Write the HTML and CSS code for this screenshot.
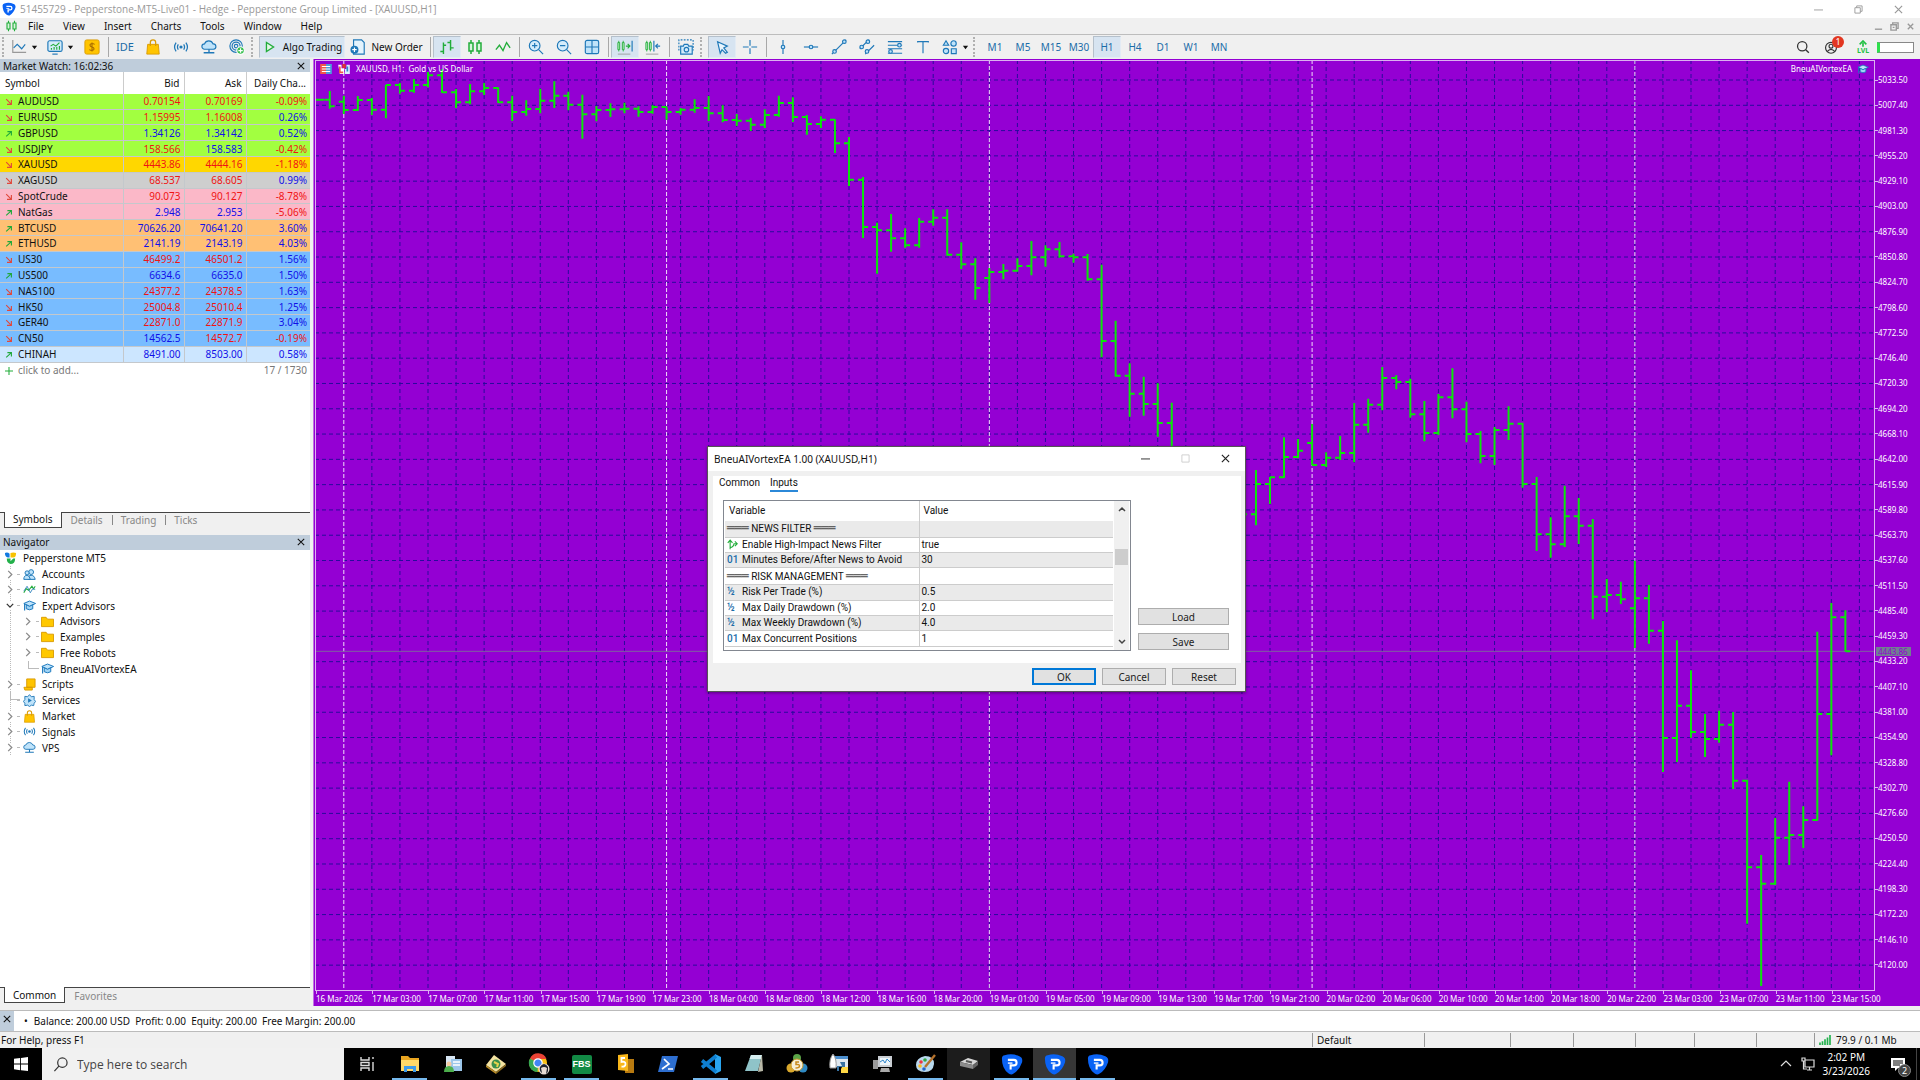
FILE: index.html
```html
<!DOCTYPE html>
<html lang="en">
<head>
<meta charset="utf-8">
<title>51455729 - Pepperstone-MT5-Live01 - Hedge - Pepperstone Group Limited - [XAUUSD,H1]</title>
<link rel="stylesheet" href="styles.css">
</head>
<body>
<svg class="defs" aria-hidden="true">
  <symbol id="shield" viewBox="0 0 24 24"><path d="M1 6Q1 3 4 2.500 12 0 20 3.500 24 5 23 10 20 19 13 23 11 24 8 22 1 17 1 6Z" fill="#0a63f5"/><path d="M7.500 7.500h6.500a2.800 2.800 0 0 1 0 6H10.500V18" fill="none" stroke="#fff" stroke-width="2.300"/><path d="M7.500 11h5" stroke="#fff" stroke-width="1.500"/></symbol>
  <symbol id="down" viewBox="0 0 10 10"><path d="M1.500 1.500 8 8M8 2.500V8H2.500" fill="none" stroke="#e0483c" stroke-width="1.400"/></symbol>
  <symbol id="up" viewBox="0 0 10 10"><path d="M1.500 8 8 2M3 2h5v5" fill="none" stroke="#1fa83a" stroke-width="1.400"/></symbol>
  <symbol id="cap" viewBox="0 0 16 14"><path d="M1 4.500 8 1.500l7.500 3L8 8Z" fill="#bfe3fa" stroke="#1b78bd" stroke-width="1.200"/><path d="M4 6v5q4 2.500 8 0V6L8 8Z" fill="#9fd3f5" stroke="#1b78bd" stroke-width="1.200"/><path d="M2 5v8" stroke="#1b78bd" stroke-width="1.400"/></symbol>
  <symbol id="bag" viewBox="0 0 16 18"><path d="M2 6h12l1 11H1Z" fill="#ffc400" stroke="#d99a00"/><path d="M5 8V4a3 3 0 0 1 6 0v4" fill="none" stroke="#d99a00" stroke-width="1.400"/></symbol>
  <symbol id="signal" viewBox="0 0 18 14"><g fill="none" stroke="#1f78b8" stroke-width="1.400"><path d="M3.500 2Q0 7 3.500 12M6 4Q4 7 6 10M12 4q2 3 0 6M14.500 2q3.500 5 0 10"/></g><circle cx="9" cy="7" r="1.800" fill="#1f78b8"/></symbol>
  <symbol id="cloud" viewBox="0 0 18 16"><path d="M4 10.500a3 3 0 0 1 0-6 5 5 0 0 1 9.500 0 3 3 0 0 1 .5 6Z" fill="#bfe3fa" stroke="#1f78b8" stroke-width="1.300"/><path d="M9 10.500V14M3 14.500h12" stroke="#1f78b8" stroke-width="1.500"/></symbol>
  <symbol id="folder" viewBox="0 0 14 12"><path d="M.5 1.500h5l1.500 2h6.500v8H.5Z" fill="#ffc800" stroke="#d99a00"/></symbol>
  <symbol id="chev" viewBox="0 0 8 10"><path d="m2 1 4 4-4 4" fill="none" stroke="#8a8a8a" stroke-width="1.400"/></symbol>
  <symbol id="caret" viewBox="0 0 8 5"><path d="M1 .5h6L4 4.500Z" fill="#111"/></symbol>
  <symbol id="cross" viewBox="0 0 10 10"><path d="m1 1 8 8M9 1 1 9" fill="none" stroke="currentColor" stroke-width="1.300"/></symbol>
  <symbol id="candles" viewBox="0 0 16 16"><g fill="none" stroke="#22ad3a" stroke-width="1.500"><path d="M4 1v14M12 1v14"/><path d="M2 4h4v8H2ZM10 4h4v8h-4Z" fill="#d8f5dc"/></g></symbol>
  <symbol id="branch" viewBox="0 0 14 14"><path d="M4 13V2M1 5l3-3.500L7 5M4 11q4 0 5-5h3.500M10 3l3 3-3 3" fill="none" stroke="#22ad3a" stroke-width="1.400"/></symbol>
</svg>

<header class="titlebar">
  <svg class="app-logo"><use href="#shield"/></svg>
  <h1>51455729 - Pepperstone-MT5-Live01 - Hedge - Pepperstone Group Limited - [XAUUSD,H1]</h1>
  <div class="window-controls">
    <button aria-label="Minimize"><svg viewBox="0 0 10 10"><path d="M0 5.500h10"/></svg></button>
    <button aria-label="Restore"><svg viewBox="0 0 10 10"><path d="M1 3h6v6H1ZM3 3V1h6v6H7"/></svg></button>
    <button aria-label="Close"><svg><use href="#cross"/></svg></button>
  </div>
</header>

<nav class="menubar">
  <svg class="menu-icon"><use href="#candles"/></svg>
  <button>File</button><button>View</button><button>Insert</button><button>Charts</button><button>Tools</button><button>Window</button><button>Help</button>
  <div class="child-controls">
    <button aria-label="Minimize chart"><svg viewBox="0 0 10 10"><path d="M1 8h8"/></svg></button>
    <button aria-label="Restore chart"><svg viewBox="0 0 10 10"><path d="M1 3h6v6H1ZM3 3V1h6v6H7M3 6h2"/></svg></button>
    <button aria-label="Close chart"><svg viewBox="0 0 10 10"><path d="m2 2 6 6M8 2 2 8"/></svg></button>
  </div>
</nav>

<div class="toolbar">
  <span class="grip"></span>
  <button class="split" aria-label="New chart"><svg viewBox="0 0 18 18" class="blue"><path d="M2 1v14h15" stroke="#999"/><path d="m3 10 4-4 5 5 4-5"/></svg><svg class="caret"><use href="#caret"/></svg></button>
  <button class="split" aria-label="Profiles"><svg viewBox="0 0 18 18" class="blue"><rect x="1" y="2" width="16" height="12" rx="2" fill="#d4ecfb"/><path d="M6 17h6"/><path d="M4 8l3-2 3 2 4-4M5 12v-2M8 12v-3M11 12v-3M14 12V8" stroke="#22ad3a"/></svg><svg class="caret"><use href="#caret"/></svg></button>
  <button aria-label="Symbols"><svg viewBox="0 0 18 18"><rect x="1" y="1" width="16" height="16" rx="2" fill="#ffc400" stroke="#d99a00"/><path d="M12 6q-3-2-5 0-1 2 2 3t2 3q-2 2-5 0M9 4v10" fill="none" stroke="#a86c00" stroke-width="1.200"/></svg></button>
  <span class="sep"></span>
  <button class="ide">IDE</button>
  <button aria-label="Market"><svg><use href="#bag"/></svg></button>
  <button aria-label="Signals"><svg><use href="#signal"/></svg></button>
  <button aria-label="VPS"><svg><use href="#cloud"/></svg></button>
  <button aria-label="Copy trading"><svg viewBox="0 0 18 18" class="blue"><circle cx="8" cy="8" r="7"/><circle cx="8" cy="8" r="4.500"/><circle cx="8" cy="8" r="2"/><circle cx="13" cy="13" r="4.300" fill="#3cc053" stroke="#fff"/><path d="M13 10.500v5M10.500 13h5" stroke="#fff"/></svg></button>
  <span class="grip"></span>
  <button class="labelled algo on"><svg viewBox="0 0 18 18"><path d="M5 4v10l8-5Z" fill="#e4f7e7" stroke="#22ad3a" stroke-width="1.500"/></svg>Algo Trading</button>
  <button class="labelled order"><svg viewBox="0 0 18 18" class="blue"><path d="M4 1h9l3 3v13H4Z" fill="#e3f3fd"/><circle cx="5" cy="12" r="4.500" fill="#1f78b8" stroke="none"/><path d="M5 9.500v5M2.500 12h5" stroke="#fff"/></svg>New Order</button>
  <span class="sep"></span>
  <button class="on" aria-label="Bar chart"><svg viewBox="0 0 18 18"><path d="M5 4v13M1.500 14H5M5 7h3M13 1v12M9.500 4H13M13 10h3.500" fill="none" stroke="#22ad3a" stroke-width="1.600"/></svg></button>
  <button aria-label="Candlesticks"><svg><use href="#candles"/></svg></button>
  <button aria-label="Line chart"><svg viewBox="0 0 18 18"><path d="m1 12 4-5 4 6 4-9 4 6" fill="none" stroke="#22ad3a" stroke-width="1.500"/></svg></button>
  <span class="sep"></span>
  <button aria-label="Zoom in"><svg viewBox="0 0 18 18" class="blue"><circle cx="7.500" cy="7.500" r="6" fill="#d4ecfb"/><path d="m12 12 5 5M4.500 7.500h6M7.500 4.500v6"/></svg></button>
  <button aria-label="Zoom out"><svg viewBox="0 0 18 18" class="blue"><circle cx="7.500" cy="7.500" r="6" fill="#d4ecfb"/><path d="m12 12 5 5M4.500 7.500h6"/></svg></button>
  <button aria-label="Tile windows"><svg viewBox="0 0 18 18" class="blue"><rect x="1.500" y="1.500" width="15" height="15" rx="2" fill="#bfe3fa"/><path d="M9 2v14M2 9h14"/></svg></button>
  <span class="sep"></span>
  <button class="on" aria-label="Auto scroll"><svg viewBox="0 0 18 18"><path d="M2 2v12M7 2v12" stroke="#22ad3a"/><path d="M1 4h2v8H1ZM6 4h2v8H6Z" fill="#bdf0c5" stroke="#22ad3a"/><path d="M10 8h4M12 5.500 14.500 8 12 10.500" fill="none" stroke="#22ad3a" stroke-width="1.300"/><path d="M17 2v12" stroke="#1f78b8" stroke-width="1.300"/><path d="M1 17h14" stroke="#999"/></svg></button>
  <button aria-label="Chart shift"><svg viewBox="0 0 18 18"><path d="M2 2v12M6 2v12" stroke="#22ad3a"/><path d="M1 4h2v8H1ZM5 4h2v8H5Z" fill="#bdf0c5" stroke="#22ad3a"/><path d="M10 2v12M12 8h5M14.500 5.500 12 8l2.500 2.500" fill="none" stroke="#1f78b8" stroke-width="1.300"/><path d="M1 17h14" stroke="#999"/></svg></button>
  <span class="sep"></span>
  <button aria-label="Screenshot"><svg viewBox="0 0 18 18" class="blue"><path d="M1 13V1h16v12" stroke-dasharray="2 1.500"/><path d="M3 8h3l1-2h4l1 2h4v9H3Z" fill="#d4ecfb"/><circle cx="9.500" cy="12" r="2.500"/></svg></button>
  <span class="grip"></span>
  <button class="on" aria-label="Cursor"><svg viewBox="0 0 18 18" class="blue"><path d="m4 3 11 5-4 2 4 5-2 1-4-4-2 4Z" fill="#e9f5fd"/></svg></button>
  <button aria-label="Crosshair"><svg viewBox="0 0 18 18" class="blue"><path d="M9 1v6.500M9 10.500V17M1 9h6.500M10.500 9H17"/></svg></button>
  <span class="sep"></span>
  <button aria-label="Vertical line"><svg viewBox="0 0 18 18" class="blue"><path d="M9 1v16"/><circle cx="9" cy="9" r="2" fill="#bfe3fa"/></svg></button>
  <button aria-label="Horizontal line"><svg viewBox="0 0 18 18" class="blue"><path d="M1 9h16"/><circle cx="9" cy="9" r="2" fill="#bfe3fa"/></svg></button>
  <button aria-label="Trendline"><svg viewBox="0 0 18 18" class="blue"><path d="M1 17 17 1"/><circle cx="4" cy="14" r="2" fill="#bfe3fa"/><circle cx="15" cy="3" r="2" fill="#bfe3fa"/></svg></button>
  <button aria-label="Channel"><svg viewBox="0 0 18 18" class="blue"><path d="M1 11 11 1M7 17 17 7"/><circle cx="3" cy="9" r="2" fill="#bfe3fa"/><circle cx="10" cy="3" r="2" fill="#bfe3fa"/><circle cx="9" cy="14" r="2" fill="#bfe3fa"/></svg></button>
  <button aria-label="Fibonacci"><svg viewBox="0 0 18 18" class="blue"><path d="M1 3h16M1 7h16M1 11h16M1 16h16"/><circle cx="14" cy="7" r="2" fill="#bfe3fa"/><circle cx="4" cy="14" r="2" fill="#bfe3fa"/></svg></button>
  <button aria-label="Text"><svg viewBox="0 0 18 18" class="blue"><path d="M3 4V3h12v1M9 3v13"/></svg></button>
  <button class="split" aria-label="Objects"><svg viewBox="0 0 18 18" class="blue shapes"><path d="m1.500 7 3-5 3 5Z"/><circle cx="13" cy="5" r="3"/><circle cx="4.500" cy="13.500" r="3"/><path d="M10.500 11h5.500v5.500h-5.500Z"/></svg><svg class="caret"><use href="#caret"/></svg></button>
  <span class="grip"></span>
  <button>M1</button><button>M5</button><button>M15</button><button>M30</button><button class="on">H1</button><button>H4</button><button>D1</button><button>W1</button><button>MN</button>
  <div class="toolbar-end">
    <button aria-label="Search"><svg viewBox="0 0 18 18"><circle cx="8" cy="8" r="6" fill="none" stroke="#333" stroke-width="1.600"/><path d="m12.500 12.500 4 4" stroke="#333" stroke-width="1.800"/></svg></button>
    <button class="account" aria-label="Account"><svg viewBox="0 0 18 18"><g fill="none" stroke="#333" stroke-width="1.500"><circle cx="9" cy="10" r="7"/><circle cx="9" cy="8" r="2.500"/><path d="M4 15q5-6 10 0"/></g></svg><span class="badge">1</span></button>
    <button class="lvl"><svg viewBox="0 0 12 8"><path d="M6 8V3M2 5l4-4 4 4" fill="none" stroke="#22c043" stroke-width="2"/></svg>LVL</button>
    <div class="battery"></div>
  </div>
</div>

<main class="workspace">
  <aside class="side">
    <section class="panel">
      <header class="panel-head"><h2>Market Watch: 16:02:36</h2><button aria-label="Close Market Watch"><svg><use href="#cross"/></svg></button></header>
      <table class="quotes">
        <colgroup><col class="c-sym"><col class="c-bid"><col class="c-ask"><col class="c-chg"></colgroup>
        <thead><tr><th>Symbol</th><th>Bid</th><th>Ask</th><th>Daily Cha...</th></tr></thead>
        <tbody>
          <tr class="green"><td><svg><use href="#down"/></svg>AUDUSD</td><td class="r">0.70154</td><td class="r">0.70169</td><td class="r">-0.09%</td></tr>
          <tr class="green"><td><svg><use href="#down"/></svg>EURUSD</td><td class="r">1.15995</td><td class="r">1.16008</td><td>0.26%</td></tr>
          <tr class="green"><td><svg><use href="#up"/></svg>GBPUSD</td><td>1.34126</td><td>1.34142</td><td>0.52%</td></tr>
          <tr class="green"><td><svg><use href="#down"/></svg>USDJPY</td><td class="r">158.566</td><td>158.583</td><td class="r">-0.42%</td></tr>
          <tr class="gold"><td><svg><use href="#down"/></svg>XAUUSD</td><td class="r">4443.86</td><td class="r">4444.16</td><td class="r">-1.18%</td></tr>
          <tr class="silver"><td><svg><use href="#down"/></svg>XAGUSD</td><td class="r">68.537</td><td class="r">68.605</td><td>0.99%</td></tr>
          <tr class="pink"><td><svg><use href="#down"/></svg>SpotCrude</td><td class="r">90.073</td><td class="r">90.127</td><td class="r">-8.78%</td></tr>
          <tr class="pink"><td><svg><use href="#up"/></svg>NatGas</td><td>2.948</td><td>2.953</td><td class="r">-5.06%</td></tr>
          <tr class="orange"><td><svg><use href="#up"/></svg>BTCUSD</td><td>70626.20</td><td>70641.20</td><td>3.60%</td></tr>
          <tr class="orange"><td><svg><use href="#up"/></svg>ETHUSD</td><td>2141.19</td><td>2143.19</td><td>4.03%</td></tr>
          <tr class="sky"><td><svg><use href="#down"/></svg>US30</td><td class="r">46499.2</td><td class="r">46501.2</td><td>1.56%</td></tr>
          <tr class="sky"><td><svg><use href="#up"/></svg>US500</td><td>6634.6</td><td>6635.0</td><td>1.50%</td></tr>
          <tr class="sky"><td><svg><use href="#down"/></svg>NAS100</td><td class="r">24377.2</td><td class="r">24378.5</td><td>1.63%</td></tr>
          <tr class="sky"><td><svg><use href="#down"/></svg>HK50</td><td class="r">25004.8</td><td class="r">25010.4</td><td>1.25%</td></tr>
          <tr class="sky"><td><svg><use href="#down"/></svg>GER40</td><td class="r">22871.0</td><td class="r">22871.9</td><td>3.04%</td></tr>
          <tr class="sky"><td><svg><use href="#down"/></svg>CN50</td><td>14562.5</td><td class="r">14572.7</td><td class="r">-0.19%</td></tr>
          <tr class="pale"><td><svg><use href="#up"/></svg>CHINAH</td><td>8491.00</td><td>8503.00</td><td>0.58%</td></tr>
        </tbody>
        <tfoot><tr><td colspan="2"><svg viewBox="0 0 10 10"><path d="M5 0v10M0 5h10" stroke="#22ad3a" stroke-width="1.300"/></svg>click to add...</td><td colspan="2">17 / 1730</td></tr></tfoot>
      </table>
      <div class="tabs"><button class="active">Symbols</button><button>Details</button><button>Trading</button><button>Ticks</button></div>
    </section>
    <section class="panel">
      <header class="panel-head nav-head"><h2>Navigator</h2><button aria-label="Close Navigator"><svg><use href="#cross"/></svg></button></header>
      <ul class="tree">
        <li class="root"><svg viewBox="0 0 14 14"><path d="M1 1q3-1 5 1v4H4Q1 5 1 1Z" fill="#1179e0"/><path d="M7 1q3-1 6 0 0 5-3 5H7Z" fill="#f7c200"/><path d="M3 7h4v3l3-3h2q0 6-5 6-4-1-4-6Z" fill="#23b04a"/></svg>Pepperstone MT5</li>
        <li><svg class="exp"><use href="#chev"/></svg><svg viewBox="0 0 16 14"><g fill="#bfe3fa" stroke="#1f78b8" stroke-width="1.200"><circle cx="10" cy="4" r="3"/><path d="M6 13q0-5 4-5t5 5Z"/><circle cx="5" cy="5" r="2.500"/><path d="M1 13q0-5 4-5 3 0 4 5Z"/></g></svg>Accounts</li>
        <li><svg class="exp"><use href="#chev"/></svg><svg viewBox="0 0 16 14"><path d="m1 11 3-5 3 2 4-5 2 3 2-3" fill="none" stroke="#22ad3a" stroke-width="1.300"/><path d="m1 9 4-6 4 8 3-5 3 1" fill="none" stroke="#1f78b8"/></svg>Indicators</li>
        <li><svg class="exp" viewBox="0 0 10 8"><path d="m1 2 4 4 4-4" fill="none" stroke="#333" stroke-width="1.600"/></svg><svg><use href="#cap"/></svg>Expert Advisors</li>
        <li class="sub"><svg class="exp"><use href="#chev"/></svg><svg><use href="#folder"/></svg>Advisors</li>
        <li class="sub"><svg class="exp"><use href="#chev"/></svg><svg><use href="#folder"/></svg>Examples</li>
        <li class="sub"><svg class="exp"><use href="#chev"/></svg><svg><use href="#folder"/></svg>Free Robots</li>
        <li class="sub leaf"><span class="exp"></span><svg><use href="#cap"/></svg>BneuAIVortexEA</li>
        <li><svg class="exp"><use href="#chev"/></svg><svg viewBox="0 0 14 14"><path d="M4 1h9v9H4ZM1 10h9v3H2Z" fill="#ffc400" stroke="#d99a00"/></svg>Scripts</li>
        <li class="leaf"><span class="exp"></span><svg viewBox="0 0 14 14"><path d="M7 .7 9 3l3-.5L12 6l1.500 2L12 10l-.5 2.500L9 12l-2 1.500L5 12l-3 .5L2 10 .5 8 2 6l0-3.500L5 3Z" fill="#bfe3fa" stroke="#1f78b8"/><path d="M5.500 4.500v5l4-2.500Z" fill="#1f78b8"/></svg>Services</li>
        <li><svg class="exp"><use href="#chev"/></svg><svg><use href="#bag"/></svg>Market</li>
        <li><svg class="exp"><use href="#chev"/></svg><svg><use href="#signal"/></svg>Signals</li>
        <li><svg class="exp"><use href="#chev"/></svg><svg><use href="#cloud"/></svg>VPS</li>
      </ul>
      <div class="tabs"><button class="active">Common</button><button>Favorites</button></div>
    </section>
  </aside>

  <section class="chart" aria-label="XAUUSD H1 chart">
    <div class="plot">
      <svg id="bars" viewBox="3 3 4674 2787" preserveAspectRatio="none"></svg>
      <div class="plot-title">
        <svg viewBox="0 0 14 12"><path d="M0 0h7v12H0Z" fill="#f0574a"/><path d="M7 0h7v12H7Z" fill="#4c9ddb"/><path d="M2 3h10M2 6h10M2 9h10" stroke="#fff" stroke-width="1.400"/></svg>
        <svg viewBox="0 0 14 12"><path d="M0 1h4v4h3v7H2Z" fill="#fff"/><path d="M2 3v7h4" fill="none" stroke="#f0574a" stroke-width="2"/><path d="M5 0h4v5H5Z" fill="#d33"/><path d="M10 1h4v11H8V6h2Z" fill="#d8efff"/><path d="M11 3v6" stroke="#2f86cc" stroke-width="2"/></svg>
        <span>XAUUSD, H1:&nbsp; Gold vs US Dollar</span>
        <span class="ea-name">BneuAIVortexEA</span>
        <svg><use href="#cap"/></svg>
      </div>
    </div>
    <ul class="prices" id="prices"></ul>
    <ul class="times" id="times"></ul>
  </section>
</main>

<section class="toolbox">
  <button aria-label="Close Toolbox"><svg><use href="#cross"/></svg></button>
  <p><span>•</span>Balance: 200.00 USD&nbsp; Profit: 0.00&nbsp; Equity: 200.00&nbsp; Free Margin: 200.00</p>
</section>

<footer class="status">
  <span class="help">For Help, press F1</span>
  <span>Default</span><span></span><span></span><span></span><span></span><span></span><span></span>
  <span><svg viewBox="0 0 14 12"><path d="M1 12V9M4 12V7.500M7 12V5M10 12V3M13 12V0" stroke="#22b14c" stroke-width="2"/></svg>79.9 / 0.1 Mb</span>
</footer>

<div class="taskbar">
  <button class="start" aria-label="Start"><svg viewBox="0 0 16 16"><path d="m0 2 7-1v6.500H0ZM8 1l8-1v7.500H8ZM0 8.500h7V15l-7-1ZM8 8.500h8V16l-8-1Z" fill="#fff"/></svg></button>
  <label class="search"><svg viewBox="0 0 16 16"><circle cx="10" cy="6" r="5" fill="none" stroke="#333" stroke-width="1.300"/><path d="m6.500 9.500-5 5.500" stroke="#333" stroke-width="1.300"/></svg><input type="text" placeholder="Type here to search" aria-label="Search"></label>
  <div class="apps">
    <button aria-label="Task view"><svg viewBox="0 0 22 22"><path d="M5 4v3h8V4M5 18v-3h8v3M5 9.500h8v3H5ZM17 4v2M17 9v9" fill="none" stroke="#ddd" stroke-width="1.400"/></svg></button>
    <button class="run" aria-label="File Explorer"><svg viewBox="0 0 22 22"><path d="M2 3h7l2 2h9v13H2Z" fill="#e9a520"/><path d="M2 7h18v11H2Z" fill="#ffd868"/><path d="M5 19v-6h12v6h-3v-3H8v3Z" fill="#3d9be9"/></svg></button>
    <button aria-label="Contacts"><svg viewBox="0 0 22 22"><path d="M4 3h9v12H4Z" fill="#d7e6f3"/><path d="M9 6h11v12H9Z" fill="#9cc6ea"/><path d="M11 9h7M11 12h7" stroke="#fff" stroke-width="1.500"/><circle cx="7" cy="11" r="2.500" fill="#f2c9a0"/><path d="M2 19q0-6 5-6t5 6Z" fill="#4cae4c"/></svg></button>
    <button aria-label="Editor"><svg viewBox="0 0 22 22"><path d="m1 12 8-10 12 9-10 8Z" fill="#f4e3a1"/><path d="m1 12 10 7v2L1 14Z" fill="#b98c28"/><path d="m11 19 10-8v2l-10 8Z" fill="#8a6a1c"/><circle cx="11" cy="11" r="4.500" fill="#3a8f4c"/><path d="m9 9 4 2-1 3" fill="none" stroke="#e8d34c" stroke-width="2"/></svg></button>
    <button class="run" aria-label="Chrome"><svg viewBox="0 0 22 22"><circle cx="10" cy="10" r="9" fill="#fbc116"/><path d="M10 10 2 5.500A9 9 0 0 1 18.500 6H10Z" fill="#ea4335"/><path d="M10 10 2 5.500A9 9 0 0 0 9.500 19Z" fill="#34a853"/><circle cx="10" cy="10" r="4.200" fill="#4285f4" stroke="#fff" stroke-width="1.200"/><circle cx="16" cy="16" r="5.500" fill="#e9dcd4"/><path d="M12 14q4-6 8 0v4q-1 3-2 3l1-6q-3-2-6 0l1 5q-3-2-2-6Z" fill="#20242e"/></svg></button>
    <button class="run fbs"><span>FBS</span></button>
    <button aria-label="MetaEditor"><svg viewBox="0 0 22 22"><path d="M11 6h9v14h-9Z" fill="#b87a10"/><path d="m4 2 10-1v17L4 17Z" fill="#f9b71a"/><path d="M11 5H7.500v4q4-1 4 2t-4 2.500" fill="none" stroke="#fff" stroke-width="1.800"/></svg></button>
    <button aria-label="PowerShell"><svg viewBox="0 0 22 22"><path d="M5 3h16l-4 16H1Z" fill="#2e6fd0"/><path d="m7 6 5 5-7 5M11 16h5" fill="none" stroke="#fff" stroke-width="1.700"/></svg></button>
    <button class="run" aria-label="VS Code"><svg viewBox="0 0 22 22"><path d="m15 1 6 3v14l-6 3Z" fill="#29a5f0"/><path d="m16 3-14 11.500M2 7.500 16 19" stroke="#0f7fd0" stroke-width="3.600"/></svg></button>
    <button aria-label="Notepad"><svg viewBox="0 0 22 22"><path d="M8 2h11l-4 16H2Z" fill="#8fc3c8"/><path d="M8 2h11l-1 4H6.500Z" fill="#d5eef0"/><path d="m19 2 1 16-5 1 3-14Z" fill="#b9b9a8"/></svg></button>
    <button aria-label="MetaTrader"><svg viewBox="0 0 22 22"><circle cx="11" cy="5" r="4" fill="#5ba548"/><circle cx="5" cy="15" r="4.500" fill="#d9a82c"/><circle cx="17" cy="15" r="4.500" fill="#2f8ac4"/><circle cx="11" cy="12" r="6" fill="#f6efd8" stroke="#c99a2c"/><path d="M13 9h-3v2.500q3.500-.5 3.500 1.500t-4 2" fill="none" stroke="#c98a1c" stroke-width="1.500"/></svg></button>
    <button aria-label="Python launcher"><svg viewBox="0 0 22 22"><path d="M5 3h14v11H5Z" fill="#dfe8ef"/><path d="M5 3h14v3H5Z" fill="#4c8fce"/><path d="M4 1q4 5 3 14H1Q0 6 4 1Z" fill="#fff" stroke="#999"/><path d="M11 9h5v5h-6v4H8v-5h5Z" fill="#3873a3"/><path d="M13 14h6v6h-7v-4Z" fill="#ffd845"/></svg></button>
    <button aria-label="Performance"><svg viewBox="0 0 22 22"><path d="M6 3h14v11H6Z" fill="#c9ced3"/><path d="M8 5h10v7H8Z" fill="#eef6fb"/><path d="m8 9 3-2 2 3 2-4 3 3" fill="none" stroke="#2f86cc"/><path d="M1 7h5v9H1Z" fill="#9a9a9a"/><path d="M9 15h8l1 4H8Z" fill="#aaa"/></svg></button>
    <button class="run" aria-label="Paint"><svg viewBox="0 0 22 22"><path d="M10 3q9 0 9 8-1 8-9 8Q1 19 1 12t9-9Z" fill="#b9d9ee"/><circle cx="6" cy="9" r="1.800" fill="#e34"/><circle cx="10" cy="7" r="1.800" fill="#3a4"/><circle cx="5" cy="13" r="1.800" fill="#fb2"/><circle cx="9" cy="16" r="1.800" fill="#26c"/><path d="M20 2 10 14" stroke="#b5722c" stroke-width="2.400"/></svg></button>
    <button class="dim" aria-label="Scanner"><svg viewBox="0 0 22 22"><path d="m2 9 8-4 10 3-5 4Z" fill="#d7d7d7"/><path d="m2 9 13 3v4L2 13Z" fill="#8b8b8b"/><path d="m15 12 5-4v4l-5 4Z" fill="#666"/><path d="m8 8 6 1.500" stroke="#555" stroke-width="2"/></svg></button>
    <button class="run" aria-label="Pepperstone 1"><svg><use href="#shield"/></svg></button>
    <button class="run current" aria-label="Pepperstone 2"><svg><use href="#shield"/></svg></button>
    <button class="run" aria-label="Pepperstone 3"><svg><use href="#shield"/></svg></button>
  </div>
  <div class="tray">
    <svg viewBox="0 0 14 14"><path d="m2 9 5-5 5 5"/></svg>
    <svg viewBox="0 0 14 14"><path d="M4 3h9v7H4ZM6 13h5M8.500 10v3M1 1h3v3H1ZM2.500 4v8H6"/></svg>
    <time datetime="2026-03-23T14:02">2:02 PM<br>3/23/2026</time>
    <button class="notes" aria-label="Notifications"><svg viewBox="0 0 14 14"><path d="M0 1h14v10H7l-3 3v-3H0Z" fill="#fff" stroke="none"/><path d="M2 4h10M2 6h10M2 8h7" stroke="#000"/></svg><span class="badge">2</span></button>
  </div>
</div>

<div class="dialog" role="dialog" aria-labelledby="dlg-title">
  <header>
    <h2 id="dlg-title">BneuAIVortexEA 1.00 (XAUUSD,H1)</h2>
    <button aria-label="Minimize"><svg viewBox="0 0 10 10"><path d="M0 5.500h10"/></svg></button>
    <button aria-label="Maximize" disabled><svg viewBox="0 0 10 10"><path d="M1 1h8v8H1Z"/></svg></button>
    <button aria-label="Close"><svg><use href="#cross"/></svg></button>
  </header>
  <div class="sheet">
    <div class="sheet-main">
      <div class="dlg-tabs"><button>Common</button><button class="active">Inputs</button></div>
      <div class="inputs">
        <table>
          <thead><tr><th>Variable</th><th>Value</th></tr></thead>
          <tbody>
            <tr><td><b>═══</b> NEWS FILTER <b>═══</b></td><td></td></tr>
            <tr><td><svg><use href="#branch"/></svg>Enable High-Impact News Filter</td><td>true</td></tr>
            <tr><td><i>01</i>Minutes Before/After News to Avoid</td><td>30</td></tr>
            <tr><td><b>═══</b> RISK MANAGEMENT <b>═══</b></td><td></td></tr>
            <tr><td><i>½</i>Risk Per Trade (%)</td><td>0.5</td></tr>
            <tr><td><i>½</i>Max Daily Drawdown (%)</td><td>2.0</td></tr>
            <tr><td><i>½</i>Max Weekly Drawdown (%)</td><td>4.0</td></tr>
            <tr><td><i>01</i>Max Concurrent Positions</td><td>1</td></tr>
          </tbody>
        </table>
        <div class="scroll">
          <svg viewBox="0 0 8 8"><path d="m1 6 3-3 3 3"/></svg>
          <span class="thumb"></span>
          <svg viewBox="0 0 8 8"><path d="m1 2 3 3 3-3"/></svg>
        </div>
      </div>
    </div>
    <div class="sheet-side"><button class="btn">Load</button><button class="btn">Save</button></div>
  </div>
  <footer><button class="btn primary">OK</button><button class="btn">Cancel</button><button class="btn">Reset</button></footer>
</div>
<script src="chart.js"></script>
</body>
</html>
```
FILE: styles.css
```css
* { box-sizing: border-box; }
body {
  margin: 0;
  height: 100vh;
  display: flex;
  flex-direction: column;
  overflow: hidden;
  background: #f0f0f0;
  color: #111;
  font: 10px/12px "Noto Sans", "Open Sans", sans-serif;
}
h1, h2, p, ul { margin: 0; padding: 0; font-size: inherit; font-weight: normal; list-style: none; }
button { border: 0; padding: 0; background: none; color: inherit; font: inherit; display: flex; align-items: center; justify-content: center; }
svg { display: block; flex: none; }
.defs { position: absolute; width: 0; height: 0; }

/* title and menu */
.titlebar { display: flex; align-items: center; height: 18px; padding-left: 2px; gap: 4px; background: #fff; color: #999; flex: none; }
.titlebar h1 { flex: 1; font-family: "Open Sans", sans-serif; }
.app-logo { width: 14px; height: 14px; }
.window-controls, .child-controls { display: flex; margin-left: auto; }
.window-controls button { width: 40px; }
.window-controls { padding-right: 2px; }
.window-controls svg { width: 9px; height: 9px; fill: none; stroke: #999; }
.menubar { display: flex; align-items: center; gap: 19px; height: 17px; padding: 0 2px 0 5px; border-bottom: 1px solid #bdbdbd; flex: none; }
.menu-icon { width: 13px; height: 12px; margin-right: -9px; }
.child-controls button { width: 16px; }
.child-controls svg { width: 9px; height: 9px; fill: none; stroke: #999; stroke-width: 1.5; }

/* toolbar */
.toolbar { display: flex; align-items: stretch; height: 24px; padding: 1px 0; flex: none; color: #1b6ca8; }
.toolbar button { width: 28px; font-size: 10px; }
.toolbar svg { width: 16px; height: 16px; }
.toolbar .split { width: 36px; gap: 4px; justify-content: flex-start; padding-left: 5px; }
.toolbar .caret { width: 7px; height: 5px; }
.toolbar .ide { font-size: 11px; }
.toolbar .labelled { color: #111; gap: 5px; font-size: 10px; }
.toolbar .algo { width: 86px; }
.toolbar .order { width: 83px; }
.toolbar .on { background: #d7e4f1; border: 1px solid #b5c0cb; border-right-color: #e3ebf4; border-bottom-color: #e3ebf4; }
.blue { fill: none; stroke: #1f78b8; stroke-width: 1.3; }
.shapes { fill: #bfe3fa; }
.grip { width: 8px; border-left: 2px dotted #b0b0b0; margin: 1px 0; flex: none; }
.grip:first-child { width: 4px; border-left: 0; border-right: 2px dotted #b0b0b0; margin-right: 2px; }
.sep { width: 5px; margin: 1px 0; flex: none; background: linear-gradient(#a8a8a8, #a8a8a8) 2px 0 / 1px 100% no-repeat; }
.toolbar-end { display: flex; align-items: center; margin-left: auto; padding-right: 6px; }
.toolbar-end .account { position: relative; margin-right: 4px; }
.toolbar-end svg { width: 14px; height: 14px; }
.account .badge { position: absolute; right: 1px; top: -4px; width: 12px; height: 12px; border-radius: 6px; background: #e23620; color: #fff; font-size: 9px; text-align: center; }
.toolbar .lvl { flex-direction: column; font-size: 7px; line-height: 7px; font-weight: bold; color: #22c043; }
.lvl svg { width: 10px; height: 7px; }
.battery { width: 37px; height: 11px; border: 1px solid #888; border-left: 3px solid #2ee04c; background: #fff; }

/* workspace */
.workspace { flex: 1; min-height: 0; display: grid; grid-template-columns: 310px 1fr; gap: 3px; }
.side { display: grid; grid-template-rows: 1fr 1fr; min-height: 0; }
.panel { display: flex; flex-direction: column; min-height: 0; background: #fff; }
.panel-head { display: flex; align-items: center; justify-content: space-between; height: 13px; padding: 0 5px 0 3px; background: #bfcddb; flex: none; }
.nav-head { height: 15px; }
.panel-head svg { width: 8px; height: 8px; }
.quotes { width: 100%; height: 306px; table-layout: fixed; border-collapse: collapse; }
.c-sym { width: 123px; } .c-bid { width: 61px; } .c-ask { width: 62px; }
.quotes th { height: 22px; font-weight: normal; text-align: right; padding: 0 4px; border-right: 1px solid #ccc; }
.quotes th:first-child, .quotes td:first-child { text-align: left; padding-left: 5px; }
.quotes td { padding: 0 3px 0 5px; text-align: right; color: #1010e8; border: 0 solid #c4c8cc; border-width: 0 1px 1px 0; }
.quotes td:first-child { color: #111; }
.quotes th:last-child, .quotes td:last-child { border-right: 0; white-space: nowrap; }
.quotes tbody .r { color: #f01414; }
.quotes svg { display: inline-block; width: 8px; height: 8px; margin-right: 5px; vertical-align: -1px; }
.quotes tfoot td, .quotes tfoot td:first-child { height: 16px; border: 0; color: #777; }
.green { background: #a2ff40; } .gold { background: #ffd700; } .silver { background: #cecece; }
.pink { background: #fbb8c8; } .orange { background: #ffc074; } .sky { background: #78bcff; } .pale { background: #cce6ff; }
.tabs { display: flex; height: 23px; margin-top: auto; padding: 0 0 7px 4px; background: #f0f0f0; border-top: 1px solid #444; flex: none; }
.tabs button { padding: 0 9px; color: #888; }
.tabs button + button + button { padding-left: 0; }
.tabs button + button + button::before { content: ""; width: 1px; height: 10px; background: #888; margin-right: 8px; }
.tabs .active { background: #fff; color: #111; border: solid #444; border-width: 0 1px 1px; margin-top: -1px; padding: 0 8px; }

/* navigator tree */
.tree { display: grid; grid-template-rows: repeat(13, 1fr); height: 205px; margin-top: 1px; }
.tree li { display: flex; align-items: center; gap: 6px; padding-left: 6px; background: repeating-linear-gradient(#bbb 0 1px, transparent 1px 2px) 10px 0 / 1px 100% no-repeat, linear-gradient(#bbb, #bbb) 17px 50% / 3px 1px no-repeat; }
.tree li svg { width: 13px; height: 13px; }
.tree .exp, .tree li svg.exp { width: 8px; height: 9px; margin-right: -3px; background: #fff; flex: none; }
.tree li:not(.root) > :nth-child(2) { margin-left: 6px; }
.tree li.root { padding-left: 4px; background: none; }
.tree li.sub { padding-left: 24px; background: repeating-linear-gradient(#bbb 0 1px, transparent 1px 2px) 10px 0 / 1px 100% no-repeat, linear-gradient(#bbb, #bbb) 36px 50% / 3px 1px no-repeat; }
.tree li.leaf span.exp { width: 14px; height: 16px; margin-right: -9px; background: linear-gradient(#bbb, #bbb) 4px 7px / 10px 1px no-repeat, linear-gradient(#bbb, #bbb) 4px 0 / 1px 7px no-repeat; }

/* chart */
.chart { display: grid; grid-template-columns: 1fr 45px; grid-template-rows: 1fr 15px; margin-bottom: 4px; padding: 1px 0 0 2px; background: #9400d3; color: #fff; font-size: 8px; line-height: 10px; min-width: 0; min-height: 0; box-shadow: inset 1px 0 #c070e4; }
.plot { display: grid; border: 1px solid #dcb0f0; min-width: 0; min-height: 0; }
.plot > * { grid-area: 1 / 1; min-width: 0; min-height: 0; }
#bars { width: 100%; height: 100%; }
#bars path { fill: none; vector-effect: non-scaling-stroke; }
#bars .grid-line { stroke: #2a0a9c; stroke-width: 1; stroke-dasharray: 4 3; }
#bars .day { stroke: #f0dcf8; stroke-width: 1; stroke-dasharray: 4 2; }
#bars .bid { stroke: #8060a0; stroke-width: 1; }
#bars .ohlc { stroke: #0ae60a; stroke-width: 2; }
.plot-title { display: flex; align-items: center; align-self: start; gap: 5px; padding: 3px 4px; }
.plot-title svg { width: 12px; height: 10px; margin-right: 1px; }
.ea-name { margin-left: auto; }
.prices { display: flex; flex-direction: column; justify-content: space-between; padding: 15px 0 21px; position: relative; }
.prices li { display: flex; align-items: center; height: 10px; }
.prices li::before { content: ""; width: 4px; height: 1px; background: #dcb0f0; margin-left: -1px; }
.prices .now { position: absolute; top: 63%; left: 1px; height: 9px; line-height: 9px; padding: 0 3px 0 2px; background: #708090; color: #9400d3; }
.prices .now::before { display: none; }
.times { grid-column: 1 / 3; display: grid; grid-template-columns: repeat(28, 1fr); padding: 0 32px 0 1px; white-space: nowrap; }
.times li { min-width: 0; line-height: 9px; }
.times li::before { content: ""; display: block; width: 1px; height: 3px; background: #dcb0f0; }

/* toolbox and status */
.toolbox { display: flex; height: 21px; border-top: 1px solid #bbb; background: #fff; flex: none; }
.toolbox button { width: 14px; background: #bfcddb; align-items: flex-start; padding-top: 4px; }
.toolbox svg { width: 8px; height: 8px; }
.toolbox p { align-self: center; padding-left: 10px; }
.toolbox p span { margin-right: 6px; }
.status { display: grid; grid-template-columns: 1fr 112px 86px 63px 62px 59px 62px 58px 106px; height: 17px; border-top: 1px solid #bbb; flex: none; }
.status span { display: flex; align-items: center; gap: 5px; margin: 1px 0; padding-left: 4px; border-left: 1px solid #999; }
.status .help { border: 0; padding-left: 1px; }
.status svg { width: 12px; height: 10px; }

/* taskbar */
.taskbar { display: flex; height: 32px; background: #000; color: #fff; flex: none; }
.start { width: 42px; }
.start svg { width: 14px; height: 14px; }
.search { display: flex; align-items: center; gap: 9px; width: 302px; padding: 1px 0 0 11px; background: #f1f1f1; }
.search svg { width: 15px; height: 15px; }
.search input { border: 0; background: none; padding: 0; font: 12px/16px "Open Sans", sans-serif; width: 200px; }
.search input::placeholder { color: #444; opacity: 1; }
.apps { display: flex; padding-left: 1px; }
.apps button { width: 43px; }
.apps svg { width: 22px; height: 22px; }
.apps .run { background: linear-gradient(#76b9ed, #76b9ed) 50% 100% / 35px 2px no-repeat; }
.apps .dim { background: #1c1c1c; }
.apps .current { background: linear-gradient(#76b9ed, #76b9ed) 50% 100% / 100% 2px no-repeat, #363636; }
.fbs span { width: 20px; height: 19px; border-radius: 2px; background: #128a45; font: bold 9px/19px "Liberation Sans", sans-serif; }
.tray { display: flex; align-items: center; gap: 8px; margin-left: auto; padding-right: 3px; }
.tray svg { width: 14px; height: 14px; fill: none; stroke: #ddd; stroke-width: 1.2; }
.tray time { font-size: 10px; line-height: 14px; text-align: center; }
.notes { position: relative; width: 38px; height: 32px; margin-left: 1px; border-right: 1px solid #444; }
.notes .badge { position: absolute; right: 5px; bottom: 3px; width: 13px; height: 13px; border-radius: 7px; background: #444; border: 1px solid #888; font-size: 9px; line-height: 11px; }

/* expert inputs window */
.dialog { position: absolute; left: 707px; top: 446px; width: 539px; border: 1px solid #555; background: #f0f0f0; box-shadow: 0 1px 3px #0006; }
.dialog header { display: flex; align-items: center; height: 24px; padding: 0 0 1px 6px; background: #fff; }
.dialog h2 { flex: 1; }
.dialog header button { width: 40px; color: #222; }
.dialog header svg { width: 9px; height: 9px; fill: none; stroke: #222; }
.dialog header button:disabled svg { stroke: #ccc; }
.sheet { display: flex; gap: 7px; margin: 5px 4px 0 5px; padding-right: 12px; height: 187px; background: #fff; font-family: Roboto, sans-serif; }
.sheet-main { flex: 1; padding-left: 10px; }
.dlg-tabs { display: flex; gap: 10px; height: 24px; padding-left: 6px; margin-left: -10px; align-items: flex-start; }
.dlg-tabs button { height: 16px; border-bottom: 2px solid transparent; }
.dlg-tabs .active { border-color: #2b88d8; }
.inputs { display: flex; height: 151px; border: 1px solid #828790; padding: 0 1px; overflow: hidden; }
.inputs table { flex: 1; height: 146px; table-layout: fixed; border-collapse: collapse; }
.inputs th { height: 20px; text-align: left; font-weight: normal; padding: 0 4px; }
.inputs th:first-child { width: 194px; }
.inputs tr > :first-child { border-right: 1px solid #ccc; }
.inputs td { padding: 0 2px; border-bottom: 1px solid #ccc; white-space: nowrap; }
.inputs tbody tr:nth-child(odd) { background: #eaeaea; }
.inputs svg { display: inline-block; width: 11px; height: 11px; margin-right: 4px; vertical-align: -2px; }
.inputs i { display: inline-block; width: 15px; font-style: normal; font-weight: 500; color: #1b6ca8; }
.inputs b { font: 12px/12px "DejaVu Sans", sans-serif; color: #444; }
.scroll { display: flex; flex-direction: column; align-items: center; width: 15px; margin-left: 1px; padding: 4px 0; background: #f0f0f0; }
.scroll svg { width: 8px; height: 8px; margin: 0; fill: none; stroke: #444; stroke-width: 1.5; }
.thumb { width: 13px; height: 16px; margin: 36px 0 auto; background: #cdcdcd; }
.sheet-side { display: flex; flex-direction: column; justify-content: flex-end; gap: 8px; width: 91px; padding-bottom: 13px; font-family: "Noto Sans", sans-serif; }
.btn { height: 17px; border: 1px solid #adadad; background: #e1e1e1; color: #222; }
.dialog footer { display: flex; justify-content: flex-end; gap: 6px; padding: 5px 9px 6px; }
.dialog footer .btn { width: 64px; }
.dialog footer .primary { border: 2px solid #0078d7; }
```
FILE: chart.js
```js
// Each bar is [high, low, close] or [high, low, close, open], in plot units
// measured down from the top edge. Open defaults to the previous close.
const bars = [
  [93,146,139,119],[107,162,150,125],[108,153,120],[114,165,149],[75,175,75],[69,101,92],[57,98,75],[36,82,46],[28,99,97],[87,144,127],
  [72,133,94],[69,105,84],[82,129,127],[107,183,156],[121,167,147],[86,160,122],[64,144,107],[95,151,134],[104,236,163],[138,184,150],
  [130,171,148],[128,160,146],[139,170,156],[136,161,141],[140,179,156],[144,164,149],[118,158,144],[108,183,160],[136,187,180],[162,198,182],
  [174,213,194],[148,204,165],[107,170,129],[112,186,171],[165,224,192],[169,204,179],[178,279,250],[231,378,359],[351,534,501],[488,641,511],
  [462,575,535],[505,563,556],[474,563,485],[448,497,473],[448,587,584],[547,627,613],[595,719,684],[624,729,636,654],[612,658,632],[595,635,618],
  [543,646,592],[556,620,568],[546,593,589],[581,608,592],[582,662,658],[614,892,843],[782,950,947],[910,1070,1001],[950,1067,1032],[970,1130,1089],
  [1028,1400,1390],[1340,1500,1450],[1400,1520,1490],[1400,1520,1430],[1380,1500,1410],[1330,1430,1363],[1230,1396,1272],[1251,1332,1252],[1132,1254,1191],[1137,1195,1172],
  [1092,1216,1215,1149],[1177,1221,1193],[1128,1200,1179],[1029,1207,1094],[1016,1118,1034],[921,1051,954],[946,988,966],[956,1073,1063],[1023,1144,1119],[1002,1125,1012],
  [925,1075,1048],[1025,1147,1122],[1113,1210,1188],[1101,1215,1110],[1039,1140,1091],[1088,1283,1272],[1251,1473,1423],[1372,1493,1453],[1277,1461,1369],[1314,1452,1397],
  [1377,1678,1610],[1557,1656,1605],[1565,1632,1618],[1502,1764,1615,1645],[1575,1751,1712],[1683,2136,2034],[1741,2106,1937],[1831,2033,2016],[1962,2091,2037],[1952,2048,1994],
  [1956,2187,2162],[2159,2591,2422],[2385,2778,2471],[2274,2475,2333],[2165,2415,2325],[2239,2364,2280],[1715,2282,1962],[1629,2086,1672],[1651,1774,1774]
];
const STEP = 42.1, FIRST_DAY = 86.4, TICK = 15, WIDTH = 4677, HEIGHT = 2790;
const ROW = 75.87, FIRST_ROW = 60;

const svg = document.getElementById("bars");
function draw(d, cls) {
  const p = document.createElementNS("http://www.w3.org/2000/svg", "path");
  p.setAttribute("d", d);
  p.setAttribute("class", cls);
  svg.append(p);
}

for (let r = 0; r < 36; r++) draw(`M0 ${FIRST_ROW + r * ROW}H${WIDTH}`, "grid-line");
for (let c = 1; c < 55; c++) draw(`M${FIRST_DAY + c * STEP * 2} 0V${HEIGHT}`, "grid-line");
for (let d = 0; d < 5; d++) draw(`M${FIRST_DAY + d * STEP * 23} 0V${HEIGHT}`, "day");
draw(`M0 1774H${WIDTH}`, "bid");

let path = "M0 119H28", prev = 119;
bars.forEach(([high, low, close, open = prev], n) => {
  const x = FIRST_DAY + (n - 1) * STEP;
  path += `M${x} ${high}V${low}M${x - TICK} ${open}H${x}M${x} ${close}H${x + TICK}`;
  prev = close;
});
draw(path, "ohlc");

const prices = document.getElementById("prices");
for (let r = 0; r < 36; r++) {
  const li = document.createElement("li");
  li.textContent = (5033.5 - r * 26.1).toFixed(2);
  prices.append(li);
}
const now = document.createElement("li");
now.className = "now";
now.textContent = "4443.86";
prices.append(now);

const days = { "17 Mar": "03 07 11 15 19 23", "18 Mar": "04 08 12 16 20", "19 Mar": "01 05 09 13 17 21", "20 Mar": "02 06 10 14 18 22", "23 Mar": "03 07 11 15" };
const labels = ["16 Mar 2026"];
for (const [day, hours] of Object.entries(days)) for (const h of hours.split(" ")) labels.push(`${day} ${h}:00`);
document.getElementById("times").innerHTML = labels.map(t => `<li>${t}</li>`).join("");
```
